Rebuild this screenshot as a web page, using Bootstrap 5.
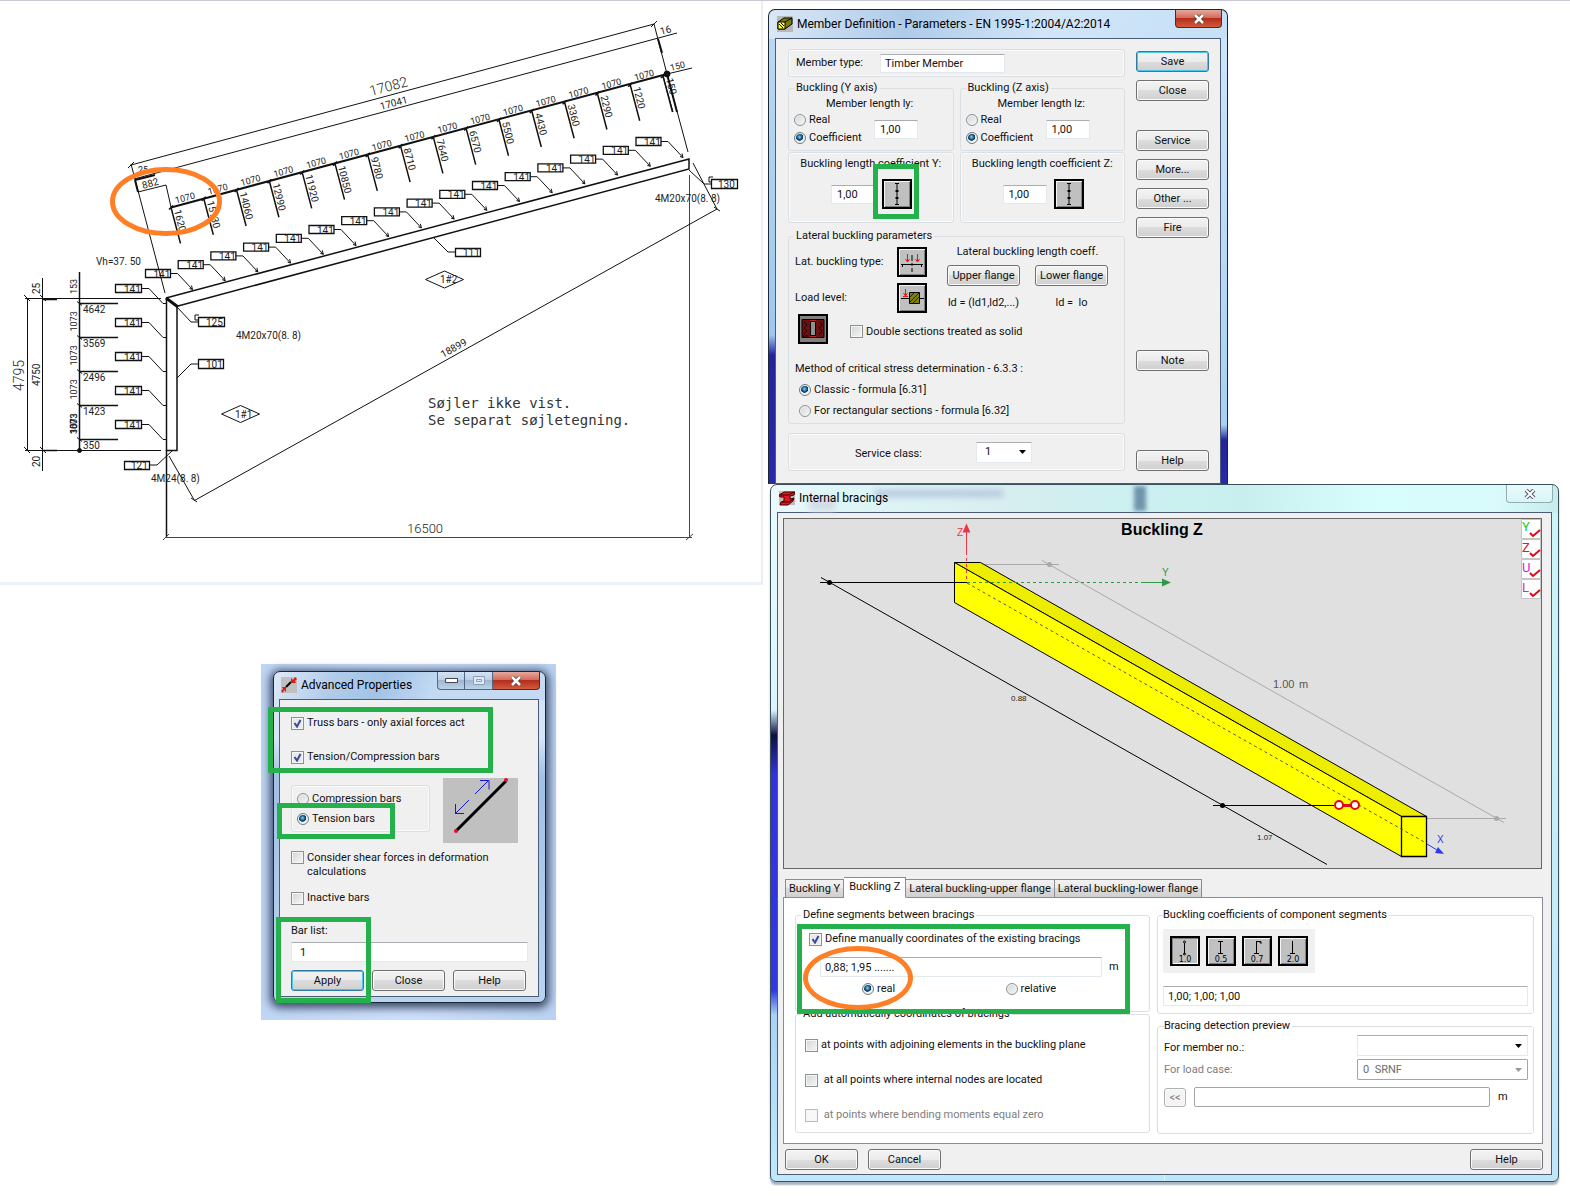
<!DOCTYPE html>
<html lang="en">
<head>
<meta charset="utf-8">
<meta name="viewport" content="width=device-width, initial-scale=1">
<title>Member Definition - Internal bracings</title>
<link href="https://cdn.jsdelivr.net/npm/bootstrap@5.3.0/dist/css/bootstrap.min.css" rel="stylesheet">
<style>
  body { background: #fff; color: #111; font-family: Roboto, "Liberation Sans", sans-serif; font-size: 11px; line-height: 14px; border-top: 1px solid #c9c9d6; }
  .desk { display: grid; grid-template-columns: 768px minmax(0, 1fr); align-items: start; }
  .sheet { margin-right: 5px; border-right: 2px solid #e9edf8; border-bottom: 3px solid #eef2fa; }
  svg { display: block; }
  .sheet svg { width: 100%; height: auto; font-family: Roboto, "Liberation Sans", sans-serif; font-size: 10px; }

  /* windows */
  .win { position: relative; border: 1px solid #1b2735; border-radius: 7px 7px 0 0; padding: 0 6px; }
  .win-bar { display: flex; align-items: center; height: 28px; padding-left: 2px; font-size: 12px; color: #000; white-space: nowrap; }
  .win-bar svg { margin-right: 4px; flex: none; }
  .win-bar > span { position: relative; }
  .win-client { border: 1px solid #4c5c77; background: #f0f0f0; }
  .win-ctl { display: flex; position: absolute; top: 0; right: 5px; }
  .ctl { height: 18px; border: 1px solid #54677f; border-top: 0; padding: 0; display: flex; align-items: center; justify-content: center; background: linear-gradient(#d5e3f3, #b9cde4 50%, #9fb7d3 50%, #bcd2ea); width: 28px; }
  .ctl svg { margin: 0; }
  .ctl:first-child { border-bottom-left-radius: 4px; }
  .ctl:last-child { border-bottom-right-radius: 4px; }
  .ctl + .ctl { border-left: 0; }
  .ctl-x { width: 47px; background: linear-gradient(#e5a99c, #d1695a 48%, #b72d1c 50%, #cf5b3c); border-color: #5b2420; }
  .ctl-pale { background: linear-gradient(#e9fbfb, #d9f5f5); border-color: #93adb3; border-radius: 0 0 4px 4px; }

  .win-member { width: 460px; max-width: 100%; margin-top: 8px; border-bottom: 0;
    background: linear-gradient(100deg, #dbe8f6 0, #aecbe9 30%, #d2e5f7 60%, #c4e0f7 100%) top / 100% 29px no-repeat,
      linear-gradient(#bcd9f3 0, #9cc9f0 325px, #23239b 345px, #2929ab 100%) left / 50% 100% no-repeat,
      linear-gradient(#cfe6f8 0, #a8d0f2 415px, #23239b 430px, #2929ab 100%) right / 50% 100% no-repeat; }
  .win-brace { margin: 0 11px 4px 2px; padding-bottom: 6px; border-color: #39505c; border-radius: 7px 7px 6px 6px; box-shadow: 0 3px 2px #a9b4c4;
    background: linear-gradient(90deg, #edf8fb 0, #dff6f7 8%, #d8eef0 30%, #cdf0f1 44%, #c8efee 60%, #d6fdfc 75%, #d9fbfb 92%, #c7eceb 100%) top / 100% 28px no-repeat,
      linear-gradient(#e8fbff 0, #d9f6ff 225px, #10103f 250px, #3333dd 290px, #2f36e2 505px, #a9d2f5 530px, #bfe9fa 100%) left / 50% 100% no-repeat,
      linear-gradient(#cdf6f7, #bfe6f7) right / 50% 100% no-repeat; }
  .win-brace .win-bar { height: 27px; padding-bottom: 1px; }
  .ghost { position: absolute; filter: blur(3px); }
  .ghost-text { left: 104px; top: 5px; width: 128px; height: 7px; background: #b4c7de; }
  .ghost-icon { left: 38px; top: 12px; width: 26px; height: 14px; background: #d3dbe6; }
  .ghost-bar { left: 363px; top: 1px; width: 12px; height: 25px; background: #6f94ac; filter: blur(2px); }

  .backdrop { width: 295px; margin: 79px 0 0 261px; padding: 7px 10px 17px 12px; background: linear-gradient(90deg, #bed5f4, #cde0fb 50%, #bad2f2); }
  .win-adv { border-radius: 7px; padding: 0 6px 5px 5px; box-shadow: 0 2px 8px 3px rgba(20, 30, 60, .75);
    background: linear-gradient(115deg, #dfeaf7 0, #b1cce9 22%, #a3c3e6 40%, #c3daf2 60%) top / 100% 28px no-repeat, linear-gradient(#cfe2f5, #d6e6f7 20%, #a0c0e4 32%, #b9d4f0); }
  .win-adv .win-bar { height: 27px; padding-bottom: 1px; }

  /* controls */
  .btn-w { --bs-btn-padding-x: 0; --bs-btn-padding-y: 0; --bs-btn-font-size: 11px; --bs-btn-line-height: 17px; --bs-btn-border-radius: 3px; --bs-btn-color: #111; --bs-btn-border-color: #707070;
    width: 73px; height: 21px; white-space: nowrap; background: linear-gradient(#f3f3f3, #ebebeb 50%, #dddddd 50%, #cfcfcf); box-shadow: inset 0 0 0 1px #fafafa; }
  .btn-w.is-default { border-color: #2d7ca3; box-shadow: inset 0 0 0 1px #48c8ee; }
  .btn-w:disabled { background: #f4f4f4; border-color: #adb2b5; color: #838383; opacity: 1; }
  .btn-back { width: 22px; height: 19px; }
  .txt { border: 1px solid #e3e9ef; border-top-color: #abadb3; background: #fff; color: #111; font: inherit; padding: 0 4px; height: 19px; min-width: 0; border-radius: 1px; }
  .txt-num { width: 44px; padding-left: 5px; }
  .txt-type { width: 125px; }
  .txt-tall { height: 20px; }
  .txt-off { border-color: #a5a5a5; border-radius: 2px; }
  .pick { appearance: none; border: 1px solid #e3e9ef; border-top-color: #abadb3; color: #111; font: inherit; padding: 0 8px; height: 21px; border-radius: 1px;
    background: #fff url("data:image/svg+xml,%3Csvg xmlns='http://www.w3.org/2000/svg' width='8' height='4'%3E%3Cpath d='M0 0h7L3.500 4z'/%3E%3C/svg%3E") right 4px center no-repeat; }
  .pick:disabled { border-color: #a5a5a5; color: #6d6d6d; opacity: 1; padding-left: 5px;
    background-image: url("data:image/svg+xml,%3Csvg xmlns='http://www.w3.org/2000/svg' width='8' height='4'%3E%3Cpath fill='%23999' d='M0 0h7L3.500 4z'/%3E%3C/svg%3E"); }
  .opt { display: flex; align-items: center; gap: 3px; white-space: nowrap; }
  .opt input { appearance: none; flex: none; width: 13px; height: 13px; margin: 0; border: 1px solid #8e8f8f; background: linear-gradient(135deg, #d2d6da, #f6f6f6); box-shadow: inset 0 0 0 1px #f6f6f6; }
  .opt input[type=radio] { width: 12px; height: 12px; border-radius: 50%; }
  .opt input[type=radio]:checked { background: radial-gradient(circle at 45% 40%, #8fd8f5 0, #1f6f9f 25%, #10334f 42%, #eef3f6 50%); border-color: #6f7a82; }
  .opt input[type=checkbox]:checked { background: #e6eaf0 url("data:image/svg+xml,%3Csvg xmlns='http://www.w3.org/2000/svg' width='11' height='11'%3E%3Cpath d='M2.500 5l2.500 3.500L8.500 2' fill='none' stroke='%233b4c8c' stroke-width='2'/%3E%3C/svg%3E"); }
  .opt input:disabled { border-color: #bcbcbc; background: #f8f8f8; }
  .opt-off { color: #7d7d7d; }
  .panel-box { border: 1px solid #d9dfe3; border-radius: 3px; box-shadow: inset 0 0 0 1px #fafafa; margin: 0; padding: 0; min-width: 0; }
  fieldset.panel-box { box-shadow: none; }
  .panel-box legend { float: none; width: auto; margin: 0 0 0 5px; padding: 0 2px; font-size: 11px; line-height: 14px; }
  .tool { width: 30px; height: 30px; padding: 0; border: 2px solid #000; background: #c0c0c0; box-shadow: inset 1px 1px 0 #f4f4f4, inset -1px -1px 0 #808080; flex: none; }
  .tool svg { width: 26px; height: 26px; }
  .tool-dark { background: #808080; box-shadow: none; }
  .tool-down { box-shadow: inset 1px 1px 0 #808080, inset -1px -1px 0 #fff; }
  .tool text { font: 8px "DejaVu Sans", sans-serif; text-anchor: middle; }

  /* marker annotations */
  .hl { position: absolute; border: 5px solid #24b14c; pointer-events: none; }
  .hl-ring { border-color: #ff7f27; border-radius: 50%; }

  /* member definition */
  .member-body { display: flex; gap: 11px; padding: 10px 11px 12px 12px; }
  .member-main { flex: 1; min-width: 0; }
  .row-type { height: 28px; padding-left: 7px; margin-bottom: 4px; }
  .row-type label { width: 84px; }
  .pair { display: grid; grid-template-columns: 1fr 1fr; gap: 6px; }
  .len-box { padding: 2px 0 3px; }
  .len-title { padding-left: 37px; }
  .len-row { display: flex; align-items: center; height: 36px; padding-left: 5px; }
  .len-row .opts { width: 80px; }
  .len-row .opt { height: 18px; }
  .coef-box { position: relative; margin-top: 1px; padding: 4px 0 13px; text-align: center; }
  .coef-row { display: flex; align-items: center; gap: 7px; padding: 8px 0 0 42px; }
  .hl-coef { left: 84px; top: 11px; width: 46px; height: 55px; }
  .lat-box { margin-top: 6px; padding: 2px 0 2px; }
  .lat-grid { display: flex; padding-left: 6px; }
  .lat-left { display: grid; grid-template-columns: 102px 30px; gap: 6px 0; align-items: center; padding-top: 2px; margin-right: 20px; }
  .lat-right { display: grid; grid-template-columns: 73px 73px; column-gap: 15px; row-gap: 6px; text-align: center; align-content: start; white-space: nowrap; }
  .lat-right div { display: flex; justify-content: center; }
  .lat-head { grid-column: 1 / 3; }
  .dbl { display: flex; align-items: end; gap: 22px; padding-left: 9px; margin: 1px 0 18px; }
  .dbl .opt { height: 25px; }
  .method { padding-left: 6px; }
  .method .opt { height: 21px; padding-left: 4px; }
  .method p { margin: 0 0 3px; }
  .svc { display: flex; align-items: center; height: 38px; margin-top: 9px; padding-left: 66px; }
  .svc label { width: 121px; padding-top: 3px; }
  .svc .pick { width: 56px; }
  .side { display: flex; flex-direction: column; gap: 8px; padding-top: 2px; width: 73px; }
  .gap-l { margin-top: 21px; }
  .gap-xl { margin-top: 104px; }

  /* internal bracings */
  .brace-body { padding: 5px 8px 4px 5px; }
  .view3d { border: 1px solid #666; background: #e0e0e0; margin-right: 1px; }
  .view3d svg { width: 100%; height: auto; font-family: "Liberation Sans", Arial, sans-serif; }
  .tabs { display: flex; align-items: end; margin: 8px 0 -1px 2px; padding: 0; position: relative; }
  .tab-btn { border: 1px solid #898c95; border-left-width: 0; height: 19px; padding: 0 3px; font: inherit; color: #111; background: linear-gradient(#f2f2f2, #e9e9e9 50%, #dcdcdc 50%, #d0d0d0); white-space: nowrap; }
  .tab-btn:first-child { border-left-width: 1px; }
  .tab-btn.active { height: 21px; background: #fff; border-bottom-color: #fff; padding: 0 5px 2px; }
  .tab-sheet { background: #fff; border: 1px solid #898c95; display: grid; grid-template-columns: 355px minmax(0, 1fr); gap: 7px; padding: 10px 8px 9px 11px; }
  .seg-box { position: relative; padding: 10px 0 15px; }
  .seg-box > .opt { padding-left: 13px; }
  .seg-in { display: flex; align-items: center; gap: 7px; padding: 11px 0 5px 24px; }
  .seg-in .txt { width: 282px; }
  .seg-mode { display: flex; padding-left: 66px; }
  .seg-mode .opt { width: 145px; }
  .hl-seg { left: 2px; top: 16px; width: 333px; height: 90px; }
  .hl-coord { left: 8px; top: 38px; width: 110px; height: 64px; }
  .auto-box { margin-top: -5px; padding: 17px 0 10px 9px; display: grid; row-gap: 21px; }
  .auto-box legend { margin-left: -4px; }
  .coefs { padding: 7px 5px 7px; }
  .coefs legend, .prev legend { margin-left: 0; padding-left: 0; }
  .coefs .tools { display: inline-flex; gap: 6px; padding: 7px; background: #f0f0f0; margin-bottom: 13px; }
  .prev { margin-top: 5px; padding: 2px 5px 26px 6px; }
  .prev-row { display: flex; align-items: center; justify-content: space-between; margin-bottom: 3px; }
  .prev-row .pick { width: 171px; }
  .prev-out { display: flex; align-items: center; gap: 8px; margin-top: 7px; }
  .prev-out .txt { flex: 1; }
  .prev-out span { width: 30px; }
  .foot { display: flex; gap: 10px; padding: 5px 0 0 2px; }

  /* advanced properties */
  .adv-body { padding: 16px 10px 5px 11px; }
  .adv-kind { display: flex; align-items: start; gap: 13px; margin: 14px 0 8px; }
  .adv-kind .panel-box { width: 139px; margin-top: 7px; padding: 3px 0 2px 5px; }
  .adv-kind .opt { height: 20px; }
  .adv-list { margin-top: 19px; }
  .hl-act { left: -6px; top: 35px; width: 225px; height: 66px; }
  .hl-tens { left: 3px; top: 131px; width: 118px; height: 36px; }
  .hl-list { left: 2px; top: 245px; width: 95px; height: 86px; }
</style>
<script src="https://cdn.jsdelivr.net/npm/bootstrap@5.3.0/dist/js/bootstrap.bundle.min.js"></script>
</head>
<body>
<main class="desk">
  <div>
    <section class="sheet" aria-label="Frame drawing">
      <svg viewBox="0 0 761 581" fill="none" stroke="#111" stroke-width="1">
        <g transform="translate(0 -1)">
          <g id="cad"></g>
          <!-- long dimension lines over the rafter -->
          <path d="M131 165L654 24M134 179L677 33M128 168l6-6M651 27l6-6M131 164l34 129M654 24l13 50 21 78M138 192l28-7 5 22"/>
          <path stroke-width="2" d="M135 180l20-5M135 180l3 12M171 207.500L667 74M658 39l4 14M667 74l10 38"/>
          <path d="M667 74l25-6M663 76l10 36"/>
          <circle cx="667" cy="74" r="3" fill="#111"/>
          <!-- rafter and column -->
          <path stroke-width="1.500" d="M166 298L689 159V169L178 306M166.500 298V450.500H177V306"/>
          <path stroke-width="3" d="M166 298l12 9"/>
          <!-- height dimensions -->
          <path d="M27.500 298V450M42.500 278V471M25 298.500H161M25 450.500H161M24 295l6 6M24 447l6 6M40 295l6 6M40 447l6 6"/>
          <path stroke-width="1.500" d="M79.500 272V450M42 299.500h15M42 450.500h15"/>
          <circle cx="79.500" cy="450.500" r="2" fill="#111"/>
          <!-- span and diagonal -->
          <path stroke-width="1.500" d="M166.500 450V538"/>
          <path stroke="#444" d="M165 537.500H692M689.500 175V537M163 540l6-6M686 540l7-6"/>
          <path d="M169 456L194.500 500.500 717 209 693 163M191 498l6 4M714 207l6 4"/>
          <!-- callouts -->
          <path d="M177 307l14 15h7M198 364h-7l-14 14M150 465h7l15-14M689 170l15 14h7M455 252h-7l-15-15M199 315h-4v5h3M713 177h-4v5h3"/>
          <path d="M221.500 414l19-8.500 19 8.500-19 8.500zM425.500 279.500l19-8.500 19 8.500-19 8.500z"/>
          <path stroke-width="1.300" d="M198.500 317.500h26v9h-26zM198.500 359.500h25v9h-25zM124.500 461.500h25v8h-25zM711.500 179.500h26v9h-26zM455.500 248.500h25v8h-25z"/>
          <g fill="#222" stroke="none">
            <text x="206" y="326">125</text><text x="206" y="368">101</text><text x="131" y="469">121</text><text x="718" y="188">130</text><text x="463" y="256">111</text>
            <text x="235" y="418">1#1</text><text x="440" y="283">1#2</text>
            <text x="236" y="339">4M20x70(8. 8)</text><text x="655" y="202">4M20x70(8. 8)</text><text x="151" y="482">4M24(8. 8)</text>
            <text x="96" y="265">Vh=37. 50</text>
            <text x="138" y="173" font-size="9">25</text>
            <text transform="translate(143 189) rotate(-15)">882</text>
            <text transform="translate(661 35) rotate(-15)">16</text>
            <text transform="translate(671 71) rotate(-15)" font-size="9">150</text>
            <text transform="translate(381 110) rotate(-15)">17041</text>
            <text transform="translate(443 358) rotate(-29)">18899</text>
            <text transform="translate(40 386) rotate(-90)">4750</text>
            <text transform="translate(40 294) rotate(-90)">25</text>
            <text transform="translate(40 467) rotate(-90)">20</text>
            <text transform="translate(77 294) rotate(-90)" font-size="9">153</text>
            <g font-weight="300" font-size="14">
              <text transform="translate(371 96) rotate(-15)">17082</text>
              <text transform="translate(24 391) rotate(-90)">4795</text>
              <text x="407" y="533" font-size="13">16500</text>
            </g>
            <g font-family="DejaVu Sans Mono, monospace" font-size="14" fill="#333"><text x="428" y="408">Søjler ikke vist.</text><text x="428" y="425">Se separat søjletegning.</text></g>
          </g>
          <ellipse cx="166" cy="201.500" rx="53.500" ry="32" stroke="#ff7f27" stroke-width="5"/>
        </g>
      </svg>
    </section>

    <div class="backdrop">
      <section class="win win-adv" aria-label="Advanced Properties">
        <div class="win-bar">
          <svg width="16" height="16" viewBox="0 0 16 16"><path fill="#c0c0c0" d="M0 0h16v16H0z"/><path d="M5 10l5-5" stroke="#000" stroke-width="2"/><path fill="#e01818" d="M10 6V1l2 2 2-3 2 2-2 2 1 2zM5 10v5l-2-2-1 3-2-2 2-2-1-2z"/></svg>
          <span>Advanced Properties</span>
          <div class="win-ctl">
            <button class="ctl" aria-label="Minimize"><svg width="13" height="5"><path d="M.5.5h12v4H.5z" fill="#fff" stroke="#445"/></svg></button>
            <button class="ctl" aria-label="Maximize"><svg width="12" height="9"><path d="M.5.5h11v8H.5zM3.500 3.500h5v2h-5z" fill="#dde8f4" stroke="#8fa0b4"/></svg></button>
            <button class="ctl ctl-x" aria-label="Close window"><svg width="12" height="10"><path d="M2 1l8 8M10 1L2 9" stroke="#543" stroke-width="4"/><path d="M2 1l8 8M10 1L2 9" stroke="#fff" stroke-width="2.500"/></svg></button>
          </div>
        </div>
        <div class="win-client adv-body">
          <label class="opt"><input type="checkbox" checked>Truss bars - only axial forces act</label>
          <label class="opt mt-3 pt-1"><input type="checkbox" checked>Tension/Compression bars</label>
          <div class="adv-kind">
            <div class="panel-box">
              <label class="opt"><input type="radio" name="kind">Compression bars</label>
              <label class="opt"><input type="radio" name="kind" checked>Tension bars</label>
            </div>
            <svg width="75" height="65" viewBox="0 0 75 65"><path fill="#c0c0c0" d="M0 0h75v65H0z"/><path d="M13 53L63 3" stroke="#000" stroke-width="3"/><path d="M32 16L46 2M37 2.500h9v9M26 22L12 36M12.500 26v9.500H21" fill="none" stroke="#1717d8"/><circle cx="13" cy="53" r="2" fill="#e01030"/><circle cx="63" cy="2" r="2" fill="#e01030"/></svg>
          </div>
          <label class="opt align-items-start"><input type="checkbox"><span>Consider shear forces in deformation<br>calculations</span></label>
          <label class="opt mt-2 pt-1"><input type="checkbox">Inactive bars</label>
          <label class="d-block adv-list" for="barlist">Bar list:</label>
          <input id="barlist" class="txt txt-tall w-100 mt-1 px-2" value="1">
          <div class="d-flex gap-2 mt-2">
            <button class="btn btn-w is-default">Apply</button><button class="btn btn-w">Close</button><button class="btn btn-w">Help</button>
          </div>
        </div>
        <i class="hl hl-act"></i><i class="hl hl-tens"></i><i class="hl hl-list"></i>
      </section>
    </div>
  </div>

  <div>
    <section class="win win-member" aria-label="Member Definition">
      <div class="win-bar">
        <svg width="16" height="16" viewBox="0 0 16 16"><path fill="#b8b8b8" d="M0 0h16v16H0z"/><path d="M1 6l6-4h8v6l-7 5H1z" fill="#7a7a10" stroke="#000"/><path d="M1 6h7v7H1z" fill="#ffff30" stroke="#000"/><path d="M8 6l7-4M2 8l4 4M4 7l3 3" stroke="#000"/></svg>
        <span>Member Definition - Parameters - EN 1995-1:2004/A2:2014</span>
        <div class="win-ctl"><button class="ctl ctl-x" aria-label="Close window"><svg width="12" height="10"><path d="M2 1l8 8M10 1L2 9" stroke="#543" stroke-width="4"/><path d="M2 1l8 8M10 1L2 9" stroke="#fff" stroke-width="2.500"/></svg></button></div>
      </div>
      <div class="win-client member-body">
        <div class="member-main">
          <div class="panel-box row-type d-flex align-items-center"><label for="mtype">Member type:</label><input id="mtype" class="txt txt-type" value="Timber Member"></div>
          <div class="pair">
            <fieldset class="panel-box len-box"><legend>Buckling (Y axis)</legend>
              <label class="len-title d-block" for="ly">Member length ly:</label>
              <div class="len-row"><div class="opts"><label class="opt"><input type="radio" name="ly">Real</label><label class="opt"><input type="radio" name="ly" checked>Coefficient</label></div><input id="ly" class="txt txt-num" value="1,00"></div>
            </fieldset>
            <fieldset class="panel-box len-box"><legend>Buckling (Z axis)</legend>
              <label class="len-title d-block" for="lz">Member length lz:</label>
              <div class="len-row"><div class="opts"><label class="opt"><input type="radio" name="lz">Real</label><label class="opt"><input type="radio" name="lz" checked>Coefficient</label></div><input id="lz" class="txt txt-num" value="1,00"></div>
            </fieldset>
          </div>
          <div class="pair">
            <div class="panel-box coef-box"><label for="cy">Buckling length coefficient Y:</label>
              <div class="coef-row"><input id="cy" class="txt txt-num" value="1,00"><button class="tool" aria-label="Buckling scheme Y"><svg viewBox="0 0 26 26"><path d="M13 3v20M11 2.500h4M11 23.500h4" stroke="#000"/><path d="M11.500 9h3v2h-3zM11.500 16h3v2h-3z"/></svg></button></div>
              <i class="hl hl-coef"></i>
            </div>
            <div class="panel-box coef-box"><label for="cz">Buckling length coefficient Z:</label>
              <div class="coef-row"><input id="cz" class="txt txt-num" value="1,00"><button class="tool" aria-label="Buckling scheme Z"><svg viewBox="0 0 26 26"><path d="M13 3v20M11 2.500h4M11 23.500h4" stroke="#000"/><path d="M11.500 9h3v2h-3zM11.500 16h3v2h-3z"/></svg></button></div>
            </div>
          </div>
          <fieldset class="panel-box lat-box"><legend>Lateral buckling parameters</legend>
            <div class="lat-grid">
              <div class="lat-left">
                <span>Lat. buckling type:</span>
                <button class="tool" aria-label="Lateral buckling type"><svg viewBox="0 0 26 26"><path d="M2 15.500h22M13 6v6M13 14v3M13 19v4M3.500 15v3M22.500 15v3" stroke="#000" fill="none"/><path d="M8.500 5v8M18.500 5v8M6.500 10l2 3 2-3M16.500 10l2 3 2-3" stroke="#e01818" fill="none"/></svg></button>
                <span>Load level:</span>
                <button class="tool" aria-label="Load level"><svg viewBox="0 0 26 26"><path d="M2 13.500h8M20 13.500h5" stroke="#000"/><path d="M10.500 7.500h10v11h-10z" fill="#808000" stroke="#000"/><path d="M11 12l4-4M11 17l9-9M14 18l6-6" stroke="#222"/><path d="M6.500 4v7M4.500 8l2 3 2-3M4 11.500h5" stroke="#e01818" fill="none"/></svg></button>
              </div>
              <div class="lat-right">
                <div class="lat-head">Lateral buckling length coeff.</div>
                <button class="btn btn-w">Upper flange</button><button class="btn btn-w">Lower flange</button>
                <div class="pt-1">ld = (ld1,ld2,...)</div><div class="pt-1">ld =&nbsp; lo</div>
              </div>
            </div>
            <div class="dbl">
              <button class="tool tool-dark" aria-label="Double section"><svg viewBox="0 0 26 26"><path d="M2 3.500h22v18H2z" fill="#6b0f12" stroke="#000"/><path d="M10.500 5.500h5v14h-5z" fill="#909090" stroke="#000"/><path d="M4 6l3 3-3 3 3 3-3 3M20 6l2 3-3 3 3 3-3 4M3 20h6" stroke="#220000" fill="none"/><path d="M10 4.500h6M10 20.500h6" stroke="#c02020"/></svg></button>
              <label class="opt"><input type="checkbox">Double sections treated as solid</label>
            </div>
            <div class="method">
              <p>Method of critical stress determination - 6.3.3 :</p>
              <label class="opt"><input type="radio" name="mth" checked>Classic - formula [6.31]</label>
              <label class="opt"><input type="radio" name="mth">For rectangular sections - formula [6.32]</label>
            </div>
          </fieldset>
          <div class="panel-box svc"><label for="svc">Service class:</label><select id="svc" class="pick"><option>1</option></select></div>
        </div>
        <div class="side">
          <button class="btn btn-w is-default">Save</button>
          <button class="btn btn-w">Close</button>
          <button class="btn btn-w gap-l">Service</button>
          <button class="btn btn-w">More...</button>
          <button class="btn btn-w">Other ...</button>
          <button class="btn btn-w">Fire</button>
          <button class="btn btn-w gap-xl">Note</button>
          <button class="btn btn-w mt-auto">Help</button>
        </div>
      </div>
    </section>

    <section class="win win-brace" aria-label="Internal bracings">
      <i class="ghost ghost-icon"></i><i class="ghost ghost-text"></i><i class="ghost ghost-bar"></i>
      <div class="win-bar">
        <svg width="16" height="16" viewBox="0 0 16 16"><path fill="#c8b8b8" d="M0 1h16v14H0z"/><path d="M0 5l5-3h11l-1 3-4 1v3l4-1-1 3-5 4H1l1-3 3-1V7H1z" fill="#e01820" stroke="#400"/><path d="M1 5h9l5-3M3 12h7l4-3" stroke="#300" fill="none"/></svg>
        <span>Internal bracings</span>
        <div class="win-ctl"><button class="ctl ctl-x ctl-pale" aria-label="Close window"><svg width="12" height="10"><path d="M2 1l8 8M10 1L2 9" stroke="#557" stroke-width="4"/><path d="M2 1l8 8M10 1L2 9" stroke="#fff" stroke-width="2"/></svg></button></div>
      </div>
      <div class="win-client brace-body">
        <div class="view3d">
          <svg viewBox="784 519 757 349" fill="none">
            <path d="M982 564.500h77M1042 560.500L1504 822.500M1427 818.500h79" stroke="#a9a9a9"/>
            <circle cx="1049.500" cy="564.500" r="2.500" fill="#a9a9a9"/><circle cx="1496.500" cy="818.500" r="2.500" fill="#a9a9a9"/>
            <path d="M954.500 562.500h26L1426.500 816.500h-25z" fill="#eded00" stroke="#000"/>
            <path d="M954.500 562.500L1401.500 816.500v40L954.500 602.500z" fill="#ff0" stroke="#000"/>
            <path d="M1401.500 816.500h25v40h-25z" fill="#ff0" stroke="#000" stroke-width="1.300"/>
            <path d="M967 583L1426 843" stroke="#55553a" stroke-dasharray="3 3"/>
            <path d="M966.500 552v-20" stroke="#e83848"/><path d="M966.500 552v30" stroke="#e83848" stroke-dasharray="3 3"/><path d="M966.500 523.500l4 9h-8z" fill="#e83848"/>
            <path d="M967 582.500h175" stroke="#2f9a45" stroke-dasharray="3 3"/><path d="M1142 582.500h20" stroke="#2f9a45"/><path d="M1171 582.500l-9-4v8z" fill="#2f9a45"/>
            <path d="M1427 844l10 6" stroke="#3038e8"/><path d="M1444 854l-9-1 3-6z" fill="#3038e8"/>
            <path d="M820 582.500h147M821 577.500L1327 864.500M1213 805.500h121" stroke="#000"/>
            <circle cx="829.500" cy="582.500" r="2.500" fill="#000"/><circle cx="1222.500" cy="805.500" r="2.500" fill="#000"/>
            <path d="M1343 805.500h8" stroke="#e00818" stroke-width="3"/>
            <circle cx="1339" cy="805" r="4" fill="#fff" stroke="#e00818" stroke-width="2"/><circle cx="1355" cy="805" r="4" fill="#fff" stroke="#e00818" stroke-width="2"/>
            <g font-size="10"><text x="957" y="536" fill="#e83848">Z</text><text x="1162" y="576" fill="#2f9a45">Y</text><text x="1437" y="843" fill="#3038e8">X</text></g>
            <g font-size="8" fill="#222"><text x="1011" y="701">0.88</text><text x="1257" y="840">1.07</text></g>
            <text x="1273" y="688" font-size="11" fill="#555">1.00</text><text x="1299" y="688" font-size="11" fill="#555">m</text>
            <text x="1162" y="535" font-size="16" font-weight="700" fill="#000" text-anchor="middle">Buckling Z</text>
            <path fill="#fff" stroke="#c4c4c4" d="M1521.500 519.500h19v19h-19zM1521.500 539.500h19v19h-19zM1521.500 559.500h19v19h-19zM1521.500 579.500h19v19h-19z"/>
            <path stroke="#e00818" stroke-width="2" d="M1530 533l3 3 7-6M1530 553l3 3 7-6M1530 573l3 3 7-6M1530 593l3 3 7-6"/>
            <g font-size="13" font-family="Roboto, sans-serif"><text x="1522" y="531" fill="#22c832">Y</text><text x="1522" y="552" fill="#e02020">Z</text><text x="1522" y="572" fill="#c828d8">U</text><text x="1522" y="592" fill="#c828d8">L</text></g>
          </svg>
        </div>
        <div class="tabs" role="tablist">
          <button class="tab-btn" role="tab">Buckling Y</button><button class="tab-btn active" role="tab" aria-selected="true">Buckling Z</button><button class="tab-btn" role="tab">Lateral buckling-upper flange</button><button class="tab-btn" role="tab">Lateral buckling-lower flange</button>
        </div>
        <div class="tab-sheet">
          <div class="position-relative">
            <fieldset class="panel-box seg-box"><legend>Define segments between bracings</legend>
              <label class="opt"><input type="checkbox" checked>Define manually coordinates of the existing bracings</label>
              <div class="seg-in"><input class="txt txt-tall" aria-label="Coordinates" value="0,88; 1,95 ......."><span>m</span></div>
              <div class="seg-mode"><label class="opt"><input type="radio" name="rel" checked>real</label><label class="opt"><input type="radio" name="rel">relative</label></div>
            </fieldset>
            <fieldset class="panel-box auto-box"><legend>Add automatically coordinates of bracings</legend>
              <label class="opt"><input type="checkbox">at points with adjoining elements in the buckling plane</label>
              <label class="opt"><input type="checkbox">&nbsp;at all points where internal nodes are located</label>
              <label class="opt opt-off"><input type="checkbox" disabled>&nbsp;at points where bending moments equal zero</label>
            </fieldset>
            <i class="hl hl-seg"></i><i class="hl hl-ring hl-coord"></i>
          </div>
          <div>
            <fieldset class="panel-box coefs"><legend>Buckling coefficients of component segments</legend>
              <div class="tools">
                <button class="tool tool-down"><svg viewBox="0 0 26 26"><path d="M12.500 5v11" stroke="#000"/><circle cx="12.500" cy="4" r="1" fill="none" stroke="#000"/><circle cx="12.500" cy="16" r="1" fill="none" stroke="#000"/><text x="13" y="24">1.0</text></svg></button>
                <button class="tool"><svg viewBox="0 0 26 26"><path d="M12.500 4v11M10 3.500h5M10 15.500h5" stroke="#000"/><text x="13" y="24">0.5</text></svg></button>
                <button class="tool"><svg viewBox="0 0 26 26"><path d="M12.500 4v11M10 15.500h5M12 3.500h5v2l-2-2" stroke="#000" fill="none"/><text x="13" y="24">0.7</text></svg></button>
                <button class="tool"><svg viewBox="0 0 26 26"><path d="M12.500 3v12M10 15.500h5" stroke="#000"/><text x="13" y="24">2.0</text></svg></button>
              </div>
              <input class="txt txt-tall d-block w-100" aria-label="Coefficients" value="1,00; 1,00; 1,00">
            </fieldset>
            <fieldset class="panel-box prev"><legend>Bracing detection preview</legend>
              <div class="prev-row"><label class="pt-1" for="fm">For member no.:</label><select id="fm" class="pick"><option></option></select></div>
              <div class="prev-row opt-off"><label for="fl">For load case:</label><select id="fl" class="pick" disabled><option>0&nbsp; SRNF</option></select></div>
              <div class="prev-out"><button class="btn btn-w btn-back" disabled>&lt;&lt;</button><input class="txt txt-tall txt-off" aria-label="Detected coordinates"><span>m</span></div>
            </fieldset>
          </div>
        </div>
        <div class="foot"><button class="btn btn-w">OK</button><button class="btn btn-w">Cancel</button><button class="btn btn-w ms-auto">Help</button></div>
      </div>
    </section>
  </div>
</main>
<script>
  // Repeated purlin marks, stations and callouts of the frame drawing
  const out = [];
  const text = (x, y, r, s, size) => `<text fill="#222" stroke="none" font-size="${size}" transform="translate(${x} ${y}) rotate(${r})">${s}</text>`;
  const stations = ['1620', '15130', '14060', '12990', '11920', '10850', '9780', '8710', '7640', '6570', '5500', '4430', '3360', '2290', '1220', '150'];
  stations.forEach((s, i) => {
    const x = 171 + 32.8 * i, y = 207.5 - 8.77 * i;
    out.push(`<path stroke-width="1.500" d="M${x} ${y}l9.500 36M${x - 2} ${y + 2}l4-4"/>`);
    out.push(text(x + 3, y + 3, 76, s, 10));
    if (i < 15) out.push(text(x + 5, y - 4, -15, '1070', 9));
    const bx = 145.5 + 32.7 * i, by = 269.5 - 8.8 * i;
    out.push(`<path stroke-width="1.300" d="M${bx} ${by}h25v8h-25z"/><path d="M${bx + 25} ${by + 4}h7l15 16m-3-1l3 1-1-4"/>`);
    out.push(text(bx + 8, by + 8, 0, '141', 10));
  });
  ['4642', '3569', '2496', '1423', '350'].forEach((s, i) => {
    const y = 303.5 + 34 * i;
    out.push(`<path stroke-width="1.500" d="M79 ${y}h39"/><path stroke-width="1.300" d="M115.500 ${y - 19}h26v8h-26z"/><path d="M142 ${y - 15}h7l14 15h3M77 ${y - 2}l5 4"/>`);
    out.push(text(124, y - 11, 0, '141', 10), text(83, y + 9, 0, s, 10));
    if (i < 4) out.push(text(77, y + 28, -90, '1073', 9));
  });
  out.push(text(77, 434, -90, '1073', 9), text(77, 434, -90, '350', 9));
  document.getElementById('cad').innerHTML = out.join('');
</script>
</body>
</html>
